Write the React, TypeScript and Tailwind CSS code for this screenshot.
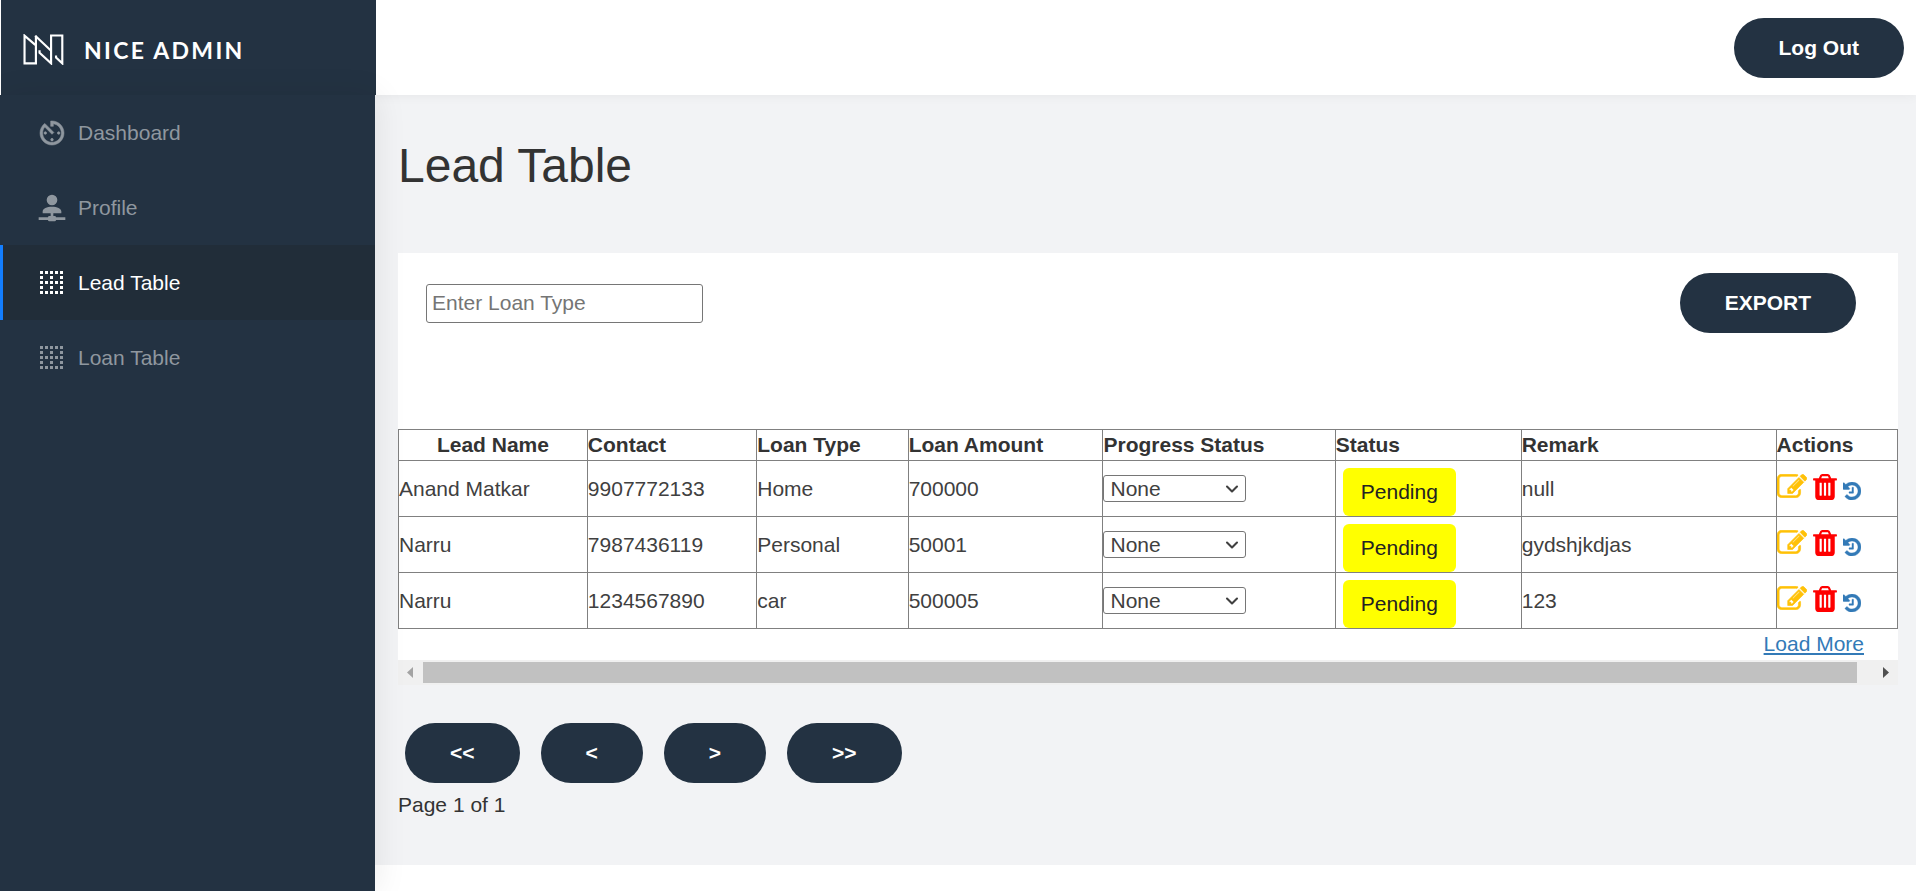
import type { ReactNode } from "react";
import { ChevronDown } from "lucide-react";

type Lead = {
  name: string;
  contact: string;
  type: string;
  amount: string;
  remark: string;
};

const leads: Lead[] = [
  { name: "Anand Matkar", contact: "9907772133", type: "Home", amount: "700000", remark: "null" },
  { name: "Narru", contact: "7987436119", type: "Personal", amount: "50001", remark: "gydshjkdjas" },
  { name: "Narru", contact: "1234567890", type: "car", amount: "500005", remark: "123" },
];

const columns = [
  { label: "Lead Name", className: "w-[12.6%] text-center" },
  { label: "Contact", className: "w-[11.3%] text-left" },
  { label: "Loan Type", className: "w-[10.1%] text-left" },
  { label: "Loan Amount", className: "w-[13%] text-left" },
  { label: "Progress Status", className: "w-[15.5%] text-left" },
  { label: "Status", className: "w-[12.4%] text-left" },
  { label: "Remark", className: "w-[17%] text-left" },
  { label: "Actions", className: "text-left" },
];

function LogoMark() {
  return (
    <svg viewBox="68 101 124 94" className="h-[31px] w-[41px]" fill="none" stroke="currentColor" strokeWidth="6.500" aria-hidden="true">
      <path d="M107 106v84H72.500V106L105 134" />
      <path d="M105 106l48 46" />
      <path d="M118 150v8l35 32v-84.500h34V190l-19-18v-6" />
    </svg>
  );
}

function TimerIcon() {
  return (
    <svg viewBox="0 0 24 24" className="size-8" fill="currentColor" stroke="currentColor" strokeWidth="0.400" aria-hidden="true">
      <path d="M11 17c0 .55.45 1 1 1s1-.45 1-1-.45-1-1-1-1 .45-1 1zm0-14v4h2V5.080c3.390.49 6 3.390 6 6.920 0 3.870-3.130 7-7 7s-7-3.130-7-7c0-1.680.59-3.220 1.580-4.420L12 13l1.410-1.410-6.800-6.800v.02C4.420 6.450 3 9.050 3 12c0 4.970 4.020 9 9 9 4.970 0 9-4.030 9-9s-4.030-9-9-9h-1zm7 9c0-.55-.45-1-1-1s-1 .45-1 1 .45 1 1 1 1-.45 1-1zM6 12c0 .55.45 1 1 1s1-.45 1-1-.45-1-1-1-1 .45-1 1z" />
    </svg>
  );
}

function GridIcon() {
  const steps = [0, 1, 2, 3, 4];
  return (
    <svg viewBox="0 0 32 32" className="size-8" fill="currentColor" aria-hidden="true">
      {steps.flatMap((row) =>
        steps
          .filter((col) => row % 2 === 0 || col % 2 === 0)
          .map((col) => <rect key={`${row}-${col}`} x={4 + col * 5} y={4 + row * 5} width="3" height="3" />),
      )}
    </svg>
  );
}

function ProfileIcon() {
  return (
    <svg viewBox="0 0 24 24" className="size-8" fill="currentColor" aria-hidden="true">
      <path d="M13 16v2h1a1 1 0 0 1 1 1h7v2h-7a1 1 0 0 1-1 1h-4a1 1 0 0 1-1-1H2v-2h7a1 1 0 0 1 1-1h1v-2H5v-1.500C5 12.570 8.130 11 12 11s7 1.570 7 3.500V16h-6zM12 2a4 4 0 1 1 0 8 4 4 0 0 1 0-8z" />
    </svg>
  );
}

function EditIcon() {
  return (
    <svg viewBox="0 128 1792 1408" className="h-6 w-[30px]" fill="currentColor" stroke="currentColor" strokeWidth="36" aria-hidden="true">
      <path d="M888 1184l116-116-152-152-116 116v56h96v96h56zm440-720q-16-16-33 1l-350 350q-17 17-1 33t33-1l350-350q17-17 1-33zm80 594v190q0 119-84.500 203.500t-203.500 84.500h-832q-119 0-203.500-84.500t-84.500-203.500v-832q0-119 84.500-203.500t203.500-84.500h832q63 0 117 25 15 7 18 23 3 17-9 29l-49 49q-14 14-32 8-23-6-45-6h-832q-66 0-113 47t-47 113v832q0 66 47 113t113 47h832q66 0 113-47t47-113v-126q0-13 9-22l64-64q15-15 35-7t20 29zm-96-738l288 288-672 672h-288v-288zm444 132l-92 92-288-288 92-92q28-28 68-28t68 28l152 152q28 28 28 68t-28 68z" />
    </svg>
  );
}

function TrashIcon() {
  return (
    <svg viewBox="192 128 1408 1536" className="h-[26px] w-6" fill="currentColor" aria-hidden="true">
      <path d="M704 1376v-704q0-14-9-23t-23-9h-64q-14 0-23 9t-9 23v704q0 14 9 23t23 9h64q14 0 23-9t9-23zm256 0v-704q0-14-9-23t-23-9h-64q-14 0-23 9t-9 23v704q0 14 9 23t23 9h64q14 0 23-9t9-23zm256 0v-704q0-14-9-23t-23-9h-64q-14 0-23 9t-9 23v704q0 14 9 23t23 9h64q14 0 23-9t9-23zm-544-992h448l-48-117q-7-9-17-11h-317q-10 2-17 11zm928 32v64q0 14-9 23t-23 9h-96v948q0 83-47 143.500t-113 60.500h-832q-66 0-113-58.500t-47-141.500v-952h-96q-14 0-23-9t-9-23v-64q0-14 9-23t23-9h309l70-167q15-37 54-63t79-26h320q40 0 79 26t54 63l70 167h309q14 0 23 9t9 23z" />
    </svg>
  );
}

function HistoryIcon() {
  return (
    <svg viewBox="128 128 1536 1536" className="size-[18px]" fill="currentColor" stroke="currentColor" strokeWidth="36" aria-hidden="true">
      <path d="M1664 896q0 156-61 298t-164 245-245 164-298 61q-172 0-327-72.500t-264-204.500q-7-10-6.500-22.500t8.500-20.500l137-138q10-9 25-9 16 2 23 12 73 95 179 147t225 52q104 0 198.500-40.500t163.500-109.500 109.500-163.500 40.500-198.500-40.500-198.500-109.500-163.500-163.500-109.500-198.500-40.500q-98 0-188 35.500t-160 101.500l137 138q31 30 14 69-17 40-59 40h-448q-26 0-45-19t-19-45v-448q0-42 40-59 39-17 69 14l130 129q107-101 244.500-156.500t284.500-55.500q156 0 298 61t245 164 164 245 61 298zm-640-288v448q0 14-9 23t-23 9h-320q-14 0-23-9t-9-23v-64q0-14 9-23t23-9h224v-352q0-14 9-23t23-9h64q14 0 23 9t9 23z" />
    </svg>
  );
}

function PillButton({ children, label }: { children: ReactNode; label?: string }) {
  return (
    <button type="button" aria-label={label} className="h-[60px] rounded-[30px] bg-[#233242] px-[45px] font-bold text-white">
      {children}
    </button>
  );
}

function NavItem({ icon, label, active = false }: { icon: ReactNode; label: string; active?: boolean }) {
  return (
    <li>
      <a
        href="#"
        aria-current={active ? "page" : undefined}
        className={
          active
            ? "flex h-[75px] items-center gap-2.5 border-l-3 border-[#137eff] bg-[#212d39] pl-[33px] text-white"
            : "flex h-[75px] items-center gap-2.5 pl-9 text-[#8f979f]"
        }
      >
        {icon}
        {label}
      </a>
    </li>
  );
}

function LeadRow({ lead }: { lead: Lead }) {
  return (
    <tr className="text-[#404040]">
      <td className="border border-[#808080] p-0">{lead.name}</td>
      <td className="border border-[#808080] p-0">{lead.contact}</td>
      <td className="border border-[#808080] p-0">{lead.type}</td>
      <td className="border border-[#808080] p-0">{lead.amount}</td>
      <td className="border border-[#808080] p-0">
        <div className="grid w-[143px] items-center">
          <select
            aria-label={`Progress status of ${lead.name}`}
            className="col-start-1 row-start-1 h-[27px] appearance-none rounded-[3px] border border-[#767676] bg-white pl-1.5 leading-6"
          >
            <option>None</option>
          </select>
          <ChevronDown className="pointer-events-none col-start-1 row-start-1 mr-1 size-5 justify-self-end" strokeWidth={2.500} />
        </div>
      </td>
      <td className="border border-[#808080] p-0">
        <div className="pt-[7px] pl-[7px]">
          <span className="flex h-12 w-[113px] items-center justify-center rounded-md bg-[#ffff00] text-[#222]">Pending</span>
        </div>
      </td>
      <td className="border border-[#808080] p-0">{lead.remark}</td>
      <td className="border border-[#808080] p-0">
        <div className="flex items-end gap-1.5 pb-1">
          <button type="button" aria-label="Edit" className="pb-0.5 text-[#ffc107]">
            <EditIcon />
          </button>
          <button type="button" aria-label="Delete" className="text-[#ff0000]">
            <TrashIcon />
          </button>
          <a href="#" aria-label="History" className="text-[#337ab7]">
            <HistoryIcon />
          </a>
        </div>
      </td>
    </tr>
  );
}

export default function App() {
  return (
    <div className="flex min-h-screen flex-col bg-white font-['Liberation_Sans',Arial,sans-serif] text-[21px] leading-[30px] text-[#333]">
      <header className="z-10 flex h-[95px] items-center justify-between bg-white pr-3 shadow-[0_0_12px_rgba(0,0,0,0.06)]">
        <a href="#" className="ml-px flex h-full w-[375px] items-center gap-5 bg-[#233242] pt-1 pl-[22px] text-white">
          <LogoMark />
          <span className="font-['Lato',sans-serif] text-[23px] font-bold tracking-widest">NICE ADMIN</span>
        </a>
        <PillButton>Log Out</PillButton>
      </header>

      <div className="flex grow">
        <aside className="z-20 w-[375px] shrink-0 bg-[#233242] shadow-[2px_0_30px_rgba(0,0,0,0.08)]">
          <nav>
            <ul>
              <NavItem icon={<TimerIcon />} label="Dashboard" />
              <NavItem icon={<ProfileIcon />} label="Profile" />
              <NavItem icon={<GridIcon />} label="Lead Table" active />
              <NavItem icon={<GridIcon />} label="Loan Table" />
            </ul>
          </nav>
        </aside>

        <div className="flex min-w-0 grow flex-col">
          <main className="bg-[#f2f3f5] pt-11 pr-[18px] pb-[45px] pl-[23px]">
            <h1 className="mb-[61px] text-5xl leading-[53px]">Lead Table</h1>

            <section className="bg-white pt-5">
              <div className="mb-24 flex items-center justify-between pr-[42px] pl-7">
                <input
                  type="text"
                  aria-label="Loan type"
                  placeholder="Enter Loan Type"
                  className="h-[39px] w-[277px] rounded-[3px] border border-[#767676] px-[5px] placeholder:text-[#757575]"
                />
                <PillButton>EXPORT</PillButton>
              </div>

              <table className="w-full table-fixed border-collapse">
                <thead>
                  <tr>
                    {columns.map((column) => (
                      <th key={column.label} scope="col" className={`border border-[#808080] p-0 ${column.className}`}>
                        {column.label}
                      </th>
                    ))}
                  </tr>
                </thead>
                <tbody>
                  {leads.map((lead) => (
                    <LeadRow key={lead.contact} lead={lead} />
                  ))}
                </tbody>
              </table>

              <div className="flex h-[31px] justify-end pr-[34px]">
                <a href="#" className="text-[#337ab7] underline decoration-2 underline-offset-2">
                  Load More
                </a>
              </div>

              <div className="flex h-[25px] items-center justify-between bg-[#f0f0f0]" aria-hidden="true">
                <svg viewBox="0 0 25 25" className="size-[25px]" fill="#a3a3a3">
                  <path d="M15 7v11L9 12.500z" />
                </svg>
                <div className="mr-4 h-[21px] grow bg-[#c1c1c1]" />
                <svg viewBox="0 0 25 25" className="size-[25px]" fill="#505050">
                  <path d="M10 7v11l6-5.500z" />
                </svg>
              </div>
            </section>

            <div className="mt-[38px] mb-[7px] flex gap-[21px] pl-[7px]">
              <PillButton label="First page">&lt;&lt;</PillButton>
              <PillButton label="Previous page">&lt;</PillButton>
              <PillButton label="Next page">&gt;</PillButton>
              <PillButton label="Last page">&gt;&gt;</PillButton>
            </div>
            <p>Page 1 of 1</p>
          </main>
          <footer className="h-[26px] bg-white" />
        </div>
      </div>
    </div>
  );
}
